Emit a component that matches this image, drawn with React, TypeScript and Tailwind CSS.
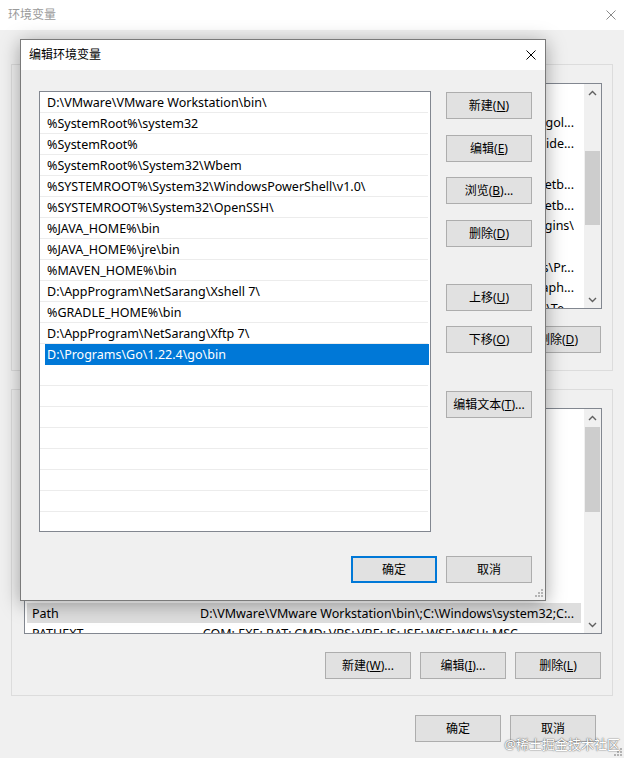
import type { ReactNode } from 'react';

const dialogPaths = [
  'D:\\VMware\\VMware Workstation\\bin\\',
  '%SystemRoot%\\system32',
  '%SystemRoot%',
  '%SystemRoot%\\System32\\Wbem',
  '%SYSTEMROOT%\\System32\\WindowsPowerShell\\v1.0\\',
  '%SYSTEMROOT%\\System32\\OpenSSH\\',
  '%JAVA_HOME%\\bin',
  '%JAVA_HOME%\\jre\\bin',
  '%MAVEN_HOME%\\bin',
  'D:\\AppProgram\\NetSarang\\Xshell 7\\',
  '%GRADLE_HOME%\\bin',
  'D:\\AppProgram\\NetSarang\\Xftp 7\\',
  'D:\\Programs\\Go\\1.22.4\\go\\bin',
];

type VarRow = { name: string; value: string; cut?: boolean; sel?: boolean };

// user variables (top list, mostly hidden behind the dialog)
const userVars: VarRow[] = [
  { name: 'GOPATH', value: 'C:\\Users\\Administrator\\go;D:\\Programs\\gol...', cut: true },
  { name: 'IntelliJ IDEA', value: 'D:\\Programs\\JetBrains\\IntelliJ IDEA\\bin;D:\\Pide...', cut: true },
  { name: 'OneDrive', value: 'C:\\Users\\Administrator\\OneDrive' },
  { name: 'JetBrains Gateway', value: 'D:\\Programs\\JetBrains\\Gateway\\bin;D:\\jetb...', cut: true },
  { name: 'PyCharm', value: 'D:\\Programs\\JetBrains\\PyCharm\\bin;D:\\jetb...', cut: true },
  { name: 'MAVEN_OPTS', value: 'D:\\Programs\\apache-maven\\lib\\plugins\\', cut: true },
  { name: 'OneDriveConsumer', value: 'C:\\Users\\Administrator\\OneDrive' },
  { name: 'Path', value: '%USERPROFILE%\\go\\bin;D:\\Programs\\Pr...', cut: true },
  { name: 'PyCharm Community Edition', value: 'D:\\Programs\\JetBrains\\Graph...', cut: true },
  { name: 'TEMP', value: 'C:\\Users\\Administrator\\AppData\\Local\\Te...', cut: true },
];

// system variables (bottom list)
const systemVars: VarRow[] = [
  { name: 'ComSpec', value: 'C:\\Windows\\system32\\cmd.exe' },
  { name: 'DriverData', value: 'C:\\Windows\\System32\\Drivers\\DriverData' },
  { name: 'GRADLE_HOME', value: 'D:\\Programs\\gradle-8.5' },
  { name: 'JAVA_HOME', value: 'D:\\Programs\\Java\\jdk1.8.0_202' },
  { name: 'MAVEN_HOME', value: 'D:\\Programs\\apache-maven-3.9.6' },
  { name: 'NUMBER_OF_PROCESSORS', value: '16' },
  { name: 'OS', value: 'Windows_NT' },
  { name: 'Path', value: 'D:\\VMware\\VMware Workstation\\bin\\;C:\\Windows\\system32;C:...', sel: true },
  { name: 'PATHEXT', value: '.COM;.EXE;.BAT;.CMD;.VBS;.VBE;.JS;.JSE;.WSF;.WSH;.MSC' },
];

function CloseIcon({ color }: { color: string }) {
  return (
    <svg width="10" height="10" viewBox="0 0 10 10">
      <path d="M0.5 0.5 L9.5 9.5 M9.5 0.5 L0.5 9.5" stroke={color} strokeWidth="1" fill="none" />
    </svg>
  );
}

function Chevron({ down }: { down?: boolean }) {
  return (
    <svg width="9" height="6" viewBox="0 0 9 6">
      <path d={down ? 'M1 1 L4.5 4.5 L8 1' : 'M1 5 L4.5 1.5 L8 5'} stroke="#606060" strokeWidth="1.4" fill="none" />
    </svg>
  );
}

function Grip() {
  return (
    <svg width="8" height="8" viewBox="0 0 8 8">
      <rect x="6" y="0" width="2" height="2" fill="#b4b4b4" />
      <rect x="3" y="3" width="2" height="2" fill="#b4b4b4" />
      <rect x="6" y="3" width="2" height="2" fill="#b4b4b4" />
      <rect x="0" y="6" width="2" height="2" fill="#b4b4b4" />
      <rect x="3" y="6" width="2" height="2" fill="#b4b4b4" />
      <rect x="6" y="6" width="2" height="2" fill="#b4b4b4" />
    </svg>
  );
}

function Btn({ children, primary, className = '' }: { children: ReactNode; primary?: boolean; className?: string }) {
  return (
    <div
      className={`flex h-[27px] w-[86px] shrink-0 items-center justify-center bg-[#e1e1e1] text-[12px] text-black ${
        primary ? 'border-2 border-[#0078d7]' : 'border border-[#adadad]'
      } ${className}`}
    >
      {children}
    </div>
  );
}

function Row({ row }: { row: VarRow }) {
  return (
    <div
      className={`flex h-[20.7px] shrink-0 items-center whitespace-nowrap pt-[2px] ${
        row.sel ? 'ml-[2px] mr-[3px] bg-[#dedede]' : ''
      }`}
    >
      <div className={row.sel ? 'w-[173px] shrink-0 pl-[5px]' : 'w-[175px] shrink-0 pl-[7px]'}>{row.name}</div>
      <div className={`w-[374px] shrink-0 overflow-hidden ${row.cut ? 'flex justify-end' : ''}`}>{row.value}</div>
    </div>
  );
}

function Scrollbar({ thumb }: { thumb: string }) {
  return (
    <div className="flex w-[17px] shrink-0 flex-col bg-[#f0f0f0]">
      <div className="flex h-[17px] items-center justify-center">
        <Chevron />
      </div>
      <div className="flex-1 px-[1px]">
        <div className={`bg-[#cdcdcd] ${thumb}`} />
      </div>
      <div className="flex h-[17px] items-center justify-center">
        <Chevron down />
      </div>
    </div>
  );
}

export default function App() {
  return (
    <div className="relative h-[758px] w-[624px] overflow-hidden bg-[#f0f0f0] font-['Noto_Sans','Noto_Sans_CJK_SC',sans-serif] text-[12px] text-black">
      {/* 环境变量 main window */}
      <div className="flex h-[30px] items-center justify-between bg-white pl-[8px] pr-[8px]">
        <span className="text-[#9a9a9a]">环境变量</span>
        <CloseIcon color="#8a8a8a" />
      </div>

      <div className="px-[11px] pt-[34px]">
        {/* user variables */}
        <div className="flex h-[307px] flex-col border border-[#dcdcdc]">
          <div className="ml-[12px] mr-[10px] mt-[18px] flex h-[226px] border border-[#828790] bg-white text-[12.5px]">
            <div className="flex flex-1 flex-col overflow-hidden">
              <div className="flex h-[28px] shrink-0 items-center">
                <div className="w-[175px] pl-[7px]">变量</div>
                <div>值</div>
              </div>
              {userVars.map((r) => (
                <Row key={r.name} row={r} />
              ))}
            </div>
            <Scrollbar thumb="mt-[50px] h-[74px]" />
          </div>
          <div className="mr-[11px] mt-[17px] flex justify-end gap-[9px]">
            <Btn>
              新建(<u>N</u>)...
            </Btn>
            <Btn>
              编辑(<u>E</u>)...
            </Btn>
            <Btn>
              删除(<u>D</u>)
            </Btn>
          </div>
        </div>

        {/* system variables */}
        <div className="mt-[18px] flex h-[307px] flex-col border border-[#dcdcdc]">
          <div className="ml-[12px] mr-[10px] mt-[18px] flex h-[226px] border border-[#828790] bg-white text-[12.5px]">
            <div className="flex flex-1 flex-col justify-end overflow-hidden">
              {systemVars.map((r) => (
                <Row key={r.name} row={r} />
              ))}
              <div className="mb-[-11px] h-0 shrink-0" />
            </div>
            <Scrollbar thumb="mt-[1px] h-[85px]" />
          </div>
          <div className="mr-[11px] mt-[18px] flex justify-end gap-[9px]">
            <Btn>
              新建(<u>W</u>)...
            </Btn>
            <Btn>
              编辑(<u>I</u>)...
            </Btn>
            <Btn>
              删除(<u>L</u>)
            </Btn>
          </div>
        </div>

        <div className="mr-[17px] mt-[19px] flex justify-end gap-[9px]">
          <Btn>确定</Btn>
          <Btn>取消</Btn>
        </div>
      </div>

      <div className="absolute bottom-[2px] right-[2px]">
        <Grip />
      </div>

      {/* 编辑环境变量 dialog */}
      <div className="absolute left-[20px] top-[39px] flex h-[562px] w-[526px] flex-col border border-[#7a7a7a] bg-[#f0f0f0] shadow-[0_3px_18px_rgba(0,0,0,0.35)]">
        <div className="flex h-[30px] shrink-0 items-center justify-between bg-white pl-[8px] pr-[9px]">
          <span>编辑环境变量</span>
          <CloseIcon color="#000" />
        </div>
        <div className="flex flex-1 flex-col pl-[18px] pr-[13px] pt-[21px]">
          <div className="flex gap-[15px]">
            <div className="h-[441px] w-[392px] overflow-hidden border border-[#828790] bg-white text-[12.5px]">
              {dialogPaths.map((p, i) =>
                i === dialogPaths.length - 1 ? (
                  <div key={p} className="flex h-[21px] pl-[5px] pr-[1px]">
                    <div className="flex flex-1 items-center bg-[#0078d7] pl-[2px] pt-[2px] text-white">{p}</div>
                  </div>
                ) : (
                  <div key={p} className="mr-[2px] flex h-[21px] items-center border-b border-[#ececec] pl-[7px] pt-[2px]">
                    {p}
                  </div>
                )
              )}
              {Array.from({ length: 8 }).map((_, i) => (
                <div key={i} className="mr-[2px] h-[21px] border-b border-[#ececec]" />
              ))}
            </div>
            <div className="flex flex-col pt-[1px]">
              <Btn>
                新建(<u>N</u>)
              </Btn>
              <Btn className="mt-[16px]">
                编辑(<u>E</u>)
              </Btn>
              <Btn className="mt-[15px]">
                浏览(<u>B</u>)...
              </Btn>
              <Btn className="mt-[16px]">
                删除(<u>D</u>)
              </Btn>
              <Btn className="mt-[37px]">
                上移(<u>U</u>)
              </Btn>
              <Btn className="mt-[15px]">
                下移(<u>O</u>)
              </Btn>
              <Btn className="mt-[38px]">
                编辑文本(<u>T</u>)...
              </Btn>
            </div>
          </div>
          <div className="mt-[24px] flex justify-end gap-[9px]">
            <Btn primary>确定</Btn>
            <Btn>取消</Btn>
          </div>
        </div>
        <div className="absolute bottom-[3px] right-[2px]">
          <Grip />
        </div>
      </div>

      {/* watermark */}
      <div className="absolute bottom-[4px] right-[4px] text-[13px] text-white [text-shadow:0_0_1.5px_#555,0_0_1px_#777]">
        @稀土掘金技术社区
      </div>
    </div>
  );
}
